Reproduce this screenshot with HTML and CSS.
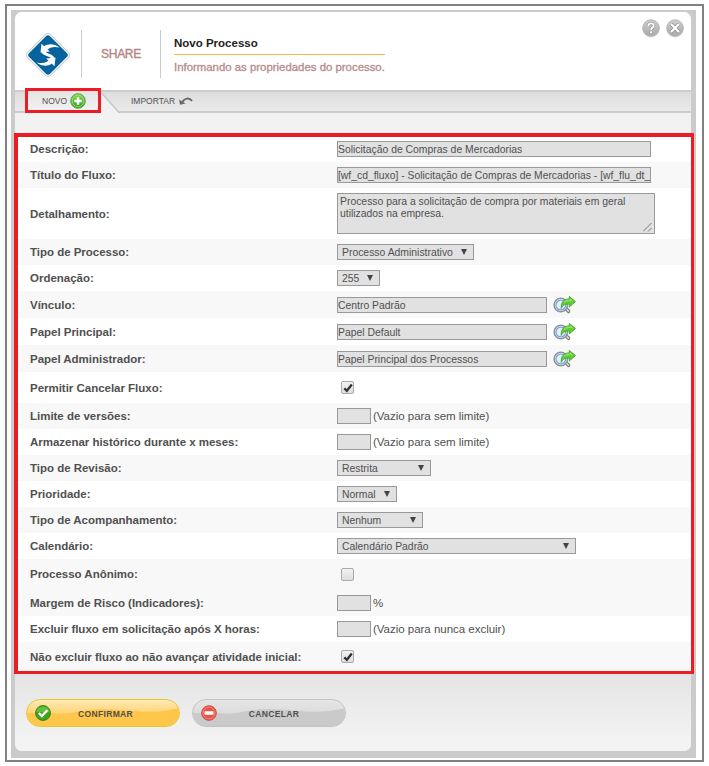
FILE: index.html
```html
<!DOCTYPE html>
<html lang="pt-BR">
<head>
<meta charset="utf-8">
<title>Novo Processo</title>
<link rel="stylesheet" href="styles.css">
</head>
<body>
<svg width="0" height="0" class="defs">
  <defs>
    <linearGradient id="green" x1="0" y1="0" x2="0" y2="1"><stop offset="0" stop-color="#8edb55"/><stop offset="1" stop-color="#2f9a1c"/></linearGradient>
    <linearGradient id="silver" x1="0" y1="0" x2="0" y2="1"><stop offset="0" stop-color="#cfcfcf"/><stop offset="1" stop-color="#a9a9a9"/></linearGradient>
    <symbol id="lookup" viewBox="0 0 23 18">
      <path d="M12.500 12l3 3.300" stroke="#777" stroke-width="3.600" stroke-linecap="round"/>
      <path d="M12.500 12l3 3.300" stroke="#ddd" stroke-width="1.500" stroke-linecap="round"/>
      <circle cx="7.800" cy="9" r="6.700" fill="#fff" stroke="#8d939a" stroke-width="1.500"/>
      <circle cx="7.800" cy="9" r="4.900" fill="#e3f0fd" stroke="#74a5dd" stroke-width="1.300"/>
      <path d="M8.200 12.500C8 5.800 11 2.900 16.300 2.900V.4L22.500 5.600l-6.200 5.400V8.200C12.400 7.800 10 8.600 8.200 12.500z" fill="#5fce35" stroke="#3d9a25" stroke-width=".8"/>
      <path d="M11 6.200c2-1.600 4-1.700 6.200-1.700V3l2.500 2.300" fill="none" stroke="#a4ee7c" stroke-width=".9"/>
    </symbol>
  </defs>
</svg>
<div class="frame">
  <div class="backdrop">
    <main class="panel">
      <header class="header">
        <svg class="logo" width="46" height="46" viewBox="0 0 46 46">
          <rect x="6.700" y="6.700" width="32.600" height="32.600" rx="4" transform="rotate(45 23 23)" fill="#fff" stroke="#c6ccd0" stroke-width="1"/>
          <rect x="8.200" y="8.200" width="29.600" height="29.600" rx="3" transform="rotate(45 23 23)" fill="#05639d"/>
          <g fill="#fff">
            <path d="M34.500 15.500C29 11.500 23.500 11.500 19.200 14.300L16.500 11.700 15.500 20.500 24.800 19.500 22.500 17.300C26 14.800 30 14.500 34.500 15.500z"/>
            <path d="M24.500 16.200C20 17.500 19.500 20 23.500 21.500 27 22.800 30 24.500 29.500 28.500L26.500 26.500C25 24.500 21 24.300 18.500 22.500 14.500 20 16.500 15.500 21 14.200z"/>
            <path d="M11.500 30.500C17 34.500 22.500 34.500 26.800 31.700L29.500 34.300 30.500 25.500 21.200 26.500 23.500 28.700C20 31.200 16 31.500 11.500 30.500z"/>
          </g>
        </svg>
        <div class="product">SHARE</div>
        <div class="heading">
          <h1>Novo Processo</h1>
          <p>Informando as propriedades do processo.</p>
        </div>
        <div class="tools">
          <svg width="18" height="20" viewBox="0 0 18 20"><circle cx="9" cy="9.700" r="8.700" fill="#ddd"/><circle cx="9" cy="9" r="8.300" fill="url(#silver)" stroke="#aaa" stroke-width=".7"/><path d="M6.200 7.300c0-4 5.800-3.600 5.500-.4-.2 1.700-2.600 1.800-2.600 4M9.100 12.300v2" fill="none" stroke="#888" stroke-width="3"/><path d="M6.200 7.300c0-4 5.800-3.600 5.500-.4-.2 1.700-2.600 1.800-2.600 4M9.100 12.300v2" fill="none" stroke="#fff" stroke-width="1.900"/></svg>
          <svg width="18" height="20" viewBox="0 0 18 20"><circle cx="9" cy="9.700" r="8.700" fill="#ddd"/><circle cx="9" cy="9" r="8.300" fill="url(#silver)" stroke="#aaa" stroke-width=".7"/><path d="M5 5l8 8M13 5l-8 8" stroke="#888" stroke-width="3.600"/><path d="M5 5l8 8M13 5l-8 8" stroke="#fff" stroke-width="2.300"/></svg>
        </div>
      </header>
      <nav class="tabs">
        <div class="tab tab-new">NOVO
          <svg width="16" height="16" viewBox="0 0 16 16"><circle cx="8" cy="8" r="7.300" fill="url(#green)" stroke="#55a747"/><circle cx="8" cy="8" r="5.800" fill="none" stroke="#a4dc83" stroke-width=".8"/><path d="M8 4.300v7.400M4.300 8h7.400" stroke="#fff" stroke-width="2.400"/></svg>
        </div>
        <svg class="slant" width="20" height="23" viewBox="0 0 20 23"><path d="M0 1.500L18 22H0z" fill="#f1f1f1"/><path d="M0 1.500L18.500 22" stroke="#c4c4c4" stroke-width="1.300"/></svg>
        <div class="tab tab-import">IMPORTAR
          <svg width="14" height="9" viewBox="0 0 14 9"><path d="M3.500 5C5.500.8 10.500.4 13 4" fill="none" stroke="#6a6a6a" stroke-width="1.900"/><path d="M0 2.600l1 5.200 5.500-1.300z" fill="#6a6a6a"/></svg>
        </div>
      </nav>
      <form class="form">
        <div class="row r26 first"><label>Descrição:</label><div class="input long">Solicitação de Compras de Mercadorias</div></div>
        <div class="row r26 alt"><label>Título do Fluxo:</label><div class="input long title">[wf_cd_fluxo] - Solicitação de Compras de Mercadorias - [wf_flu_dt_</div></div>
        <div class="row area"><label>Detalhamento:</label><div class="textarea">Processo para a solicitação de compra por materiais em geral<br>utilizados na empresa.<svg width="9" height="9" viewBox="0 0 9 9"><path d="M0 8.500L8.500 0M5 8.500L8.500 5" stroke="#777"/></svg></div></div>
        <div class="row r26 alt"><label>Tipo de Processo:</label><div class="select w-process"><span>Processo Administrativo</span><i></i></div></div>
        <div class="row r26"><label>Ordenação:</label><div class="select w-order"><span>255</span><i></i></div></div>
        <div class="row r27 alt"><label>Vínculo:</label><div class="input mid">Centro Padrão</div><svg class="lookup"><use href="#lookup"/></svg></div>
        <div class="row r27"><label>Papel Principal:</label><div class="input mid">Papel Default</div><svg class="lookup"><use href="#lookup"/></svg></div>
        <div class="row r27 alt"><label>Papel Administrador:</label><div class="input mid">Papel Principal dos Processos</div><svg class="lookup"><use href="#lookup"/></svg></div>
        <div class="row r31"><label>Permitir Cancelar Fluxo:</label><div class="check"><svg width="10" height="10" viewBox="0 0 10 10"><path d="M1.300 5.300l2.600 2.500L8.800 1.500" fill="none" stroke="#333" stroke-width="2.300"/></svg></div></div>
        <div class="row r26 alt"><label>Limite de versões:</label><div class="input tiny"></div><span class="hint">(Vazio para sem limite)</span></div>
        <div class="row r26"><label>Armazenar histórico durante x meses:</label><div class="input tiny"></div><span class="hint">(Vazio para sem limite)</span></div>
        <div class="row r26 alt"><label>Tipo de Revisão:</label><div class="select w-review"><span>Restrita</span><i></i></div></div>
        <div class="row r26"><label>Prioridade:</label><div class="select w-priority"><span>Normal</span><i></i></div></div>
        <div class="row r26 alt"><label>Tipo de Acompanhamento:</label><div class="select w-follow"><span>Nenhum</span><i></i></div></div>
        <div class="row r26"><label>Calendário:</label><div class="select w-calendar"><span>Calendário Padrão</span><i></i></div></div>
        <div class="row r30 alt"><label>Processo Anônimo:</label><div class="check"></div></div>
        <div class="row r27 alt"><label>Margem de Risco (Indicadores):</label><div class="input tiny"></div><span class="hint">%</span></div>
        <div class="row r26"><label>Excluir fluxo em solicitação após X horas:</label><div class="input tiny"></div><span class="hint">(Vazio para nunca excluir)</span></div>
        <div class="row last alt"><label>Não excluir fluxo ao não avançar atividade inicial:</label><div class="check"><svg width="10" height="10" viewBox="0 0 10 10"><path d="M1.300 5.300l2.600 2.500L8.800 1.500" fill="none" stroke="#333" stroke-width="2.300"/></svg></div></div>
      </form>
      <footer class="actions">
        <div class="button confirm">
          <svg class="wave" viewBox="0 0 154 28" preserveAspectRatio="none"><path d="M0 14H24C48 17 55 9 79 10C108 11 126 16 154 9V28H0z"/></svg>
          <svg class="badge" width="16" height="16" viewBox="0 0 16 16"><circle cx="8" cy="8" r="7.500" fill="#3da51b" stroke="#278011" stroke-width=".8"/><path d="M1.500 7C2 0 14 0 14.500 7 10 9 6 6 1.500 7z" fill="#65bd3f"/><path d="M3.800 8l3 3 5.500-5.700" fill="none" stroke="#fff" stroke-width="2.300"/></svg>
          <span>CONFIRMAR</span>
        </div>
        <div class="button cancel">
          <svg class="wave" viewBox="0 0 154 28" preserveAspectRatio="none"><path d="M0 14H24C48 17 55 9 79 10C108 11 126 16 154 9V28H0z"/></svg>
          <svg class="badge" width="16" height="16" viewBox="0 0 16 16"><circle cx="8" cy="8" r="7.300" fill="#e95348" stroke="#ce4a43"/><circle cx="8" cy="8" r="6" fill="none" stroke="#f5958d" stroke-width=".8"/><rect x="3.500" y="6.300" width="9" height="3.400" rx=".6" fill="#fff"/></svg>
          <span>CANCELAR</span>
        </div>
      </footer>
    </main>
  </div>
</div>
</body>
</html>
```
FILE: styles.css
```css
* { box-sizing: border-box; }
body { margin: 0; background: #fff; font-family: "Liberation Sans", Arial, sans-serif; color: #505050; }
.defs { position: absolute; }
.frame { width: 699px; height: 758px; margin: 4px 0 0 5px; border: 2px solid #808080; padding: 4px; }
.backdrop { width: 685px; height: 748px; background: #cbcbcb; padding: 2px 5px 7px 4px; }
.panel { width: 676px; height: 739px; border-radius: 7px; background: #f2f2f2; }
.header { height: 78px; display: flex; background: #fff; border-radius: 7px 7px 0 0; padding: 18px 7px 0 10px; }
.logo { margin-top: 2px; }
.product { width: 80px; height: 48px; margin-left: 10px; border: solid #ccc; border-width: 0 1px; display: flex; align-items: center; justify-content: center; color: #b58383; font-size: 12px; letter-spacing: -.3px; -webkit-text-stroke: .35px #b58383; }
.heading { width: 211px; margin-left: 13px; }
h1 { margin: 0; height: 25px; border-bottom: 1px solid #f7bd45; color: #222; font-size: 11.500px; line-height: 26px; letter-spacing: 0; }
.heading p { margin: 5px 0 0; font-size: 11.400px; color: #b58b8b; -webkit-text-stroke: .3px #b58b8b; line-height: 15px; white-space: nowrap; }
.tools { display: flex; gap: 6px; margin: -11px 0 0 auto; }
.tabs { height: 23px; display: flex; background: linear-gradient(#ddd, #eaeaea); border-top: 2px solid #ccc; border-bottom: 2px solid #ccc; }
.tab { display: flex; align-items: center; font-size: 8.500px; white-space: nowrap; }
.tab-new { width: 76px; height: 25px; margin: -4px 0 0 10px; border: 3px solid #ed1c24; background: linear-gradient(#e4e4e4, #f2f2f2); padding: 1px 0 0 14px; gap: 3px; }
.slant { margin-top: -1px; }
.tab-import { margin-left: 10px; gap: 4px; height: 18px; }
.form { margin: 20px -3px 0 -1px; border: solid #ed1c24; border-width: 4px 3px 3px 4px; background: #fff; }
.row { display: flex; align-items: center; padding-left: 12px; }
.alt { background: #f8f8f8; }
.first { height: 25px !important; padding-bottom: 2px; }
.r26 { height: 26px; }
.r27 { height: 27px; }
.r30 { height: 30px; }
.r31 { height: 31px; }
.area { height: 51px; }
.last { height: 29px; }
label { width: 307px; flex: none; font-size: 11.500px; letter-spacing: -.02px; font-weight: bold; line-height: 14px; white-space: nowrap; }
.input { height: 16px; border: 1px solid #999; background: #e1e1e1; font-size: 10.400px; line-height: 15px; white-space: nowrap; overflow: hidden; padding-left: 0; }
.long { width: 314px; }
.title { font-size: 10.350px; }
.mid { width: 210px; }
.tiny { width: 34px; }
.hint { font-size: 11.500px; letter-spacing: -.02px; margin-left: 2px; }
.textarea { position: relative; width: 318px; height: 41px; border: 1px solid #999; background: #e1e1e1; font-size: 10.400px; line-height: 12px; padding: 2px; white-space: nowrap; }
.textarea svg { position: absolute; right: 2px; bottom: 1px; }
.select { height: 16px; display: flex; align-items: center; justify-content: space-between; border: 1px solid #999; background: #e1e1e1; font-size: 10.400px; padding: 0 6px 0 4px; white-space: nowrap; }
.select i { border: solid transparent; border-width: 6px 3px 0; border-top-color: #444; }
.w-process { width: 137px; }
.w-order { width: 43px; }
.w-review { width: 94px; }
.w-priority { width: 60px; }
.w-follow { width: 86px; }
.w-calendar { width: 239px; }
.lookup { width: 23px; height: 18px; margin-left: 6px; }
.check { width: 13px; height: 13px; margin-left: 4px; border: 1px solid #aaa; border-radius: 2px; background: linear-gradient(#f2f2f2, #ddd); display: flex; align-items: center; justify-content: center; }
.actions { height: 77px; border-radius: 0 0 7px 7px; background: linear-gradient(#e4e4e4, #f3f3f3 85%); display: flex; gap: 12px; padding: 25px 0 0 11px; }
.button { position: relative; width: 154px; height: 28px; border-radius: 14px; overflow: hidden; display: flex; align-items: center; font-size: 8.500px; font-weight: bold; letter-spacing: .35px; padding-left: 8px; }
.button span { position: relative; width: 112px; text-align: center; padding-top: 1px; }
.confirm span { left: -1.500px; }
.cancel span { left: 1px; }
.badge { position: relative; flex: none; }
.wave { position: absolute; inset: 0; width: 100%; height: 100%; }
.confirm { border: 1.500px solid #e0cb2d; background: linear-gradient(#ffe9b5, #ffd06b 60%); }
.confirm .wave { fill: #fec64b; }
.cancel { border: 1px solid #c4c4c4; background: linear-gradient(#e6e6e6, #d2d2d2); }
.cancel .wave { fill: #cacaca; }
```
